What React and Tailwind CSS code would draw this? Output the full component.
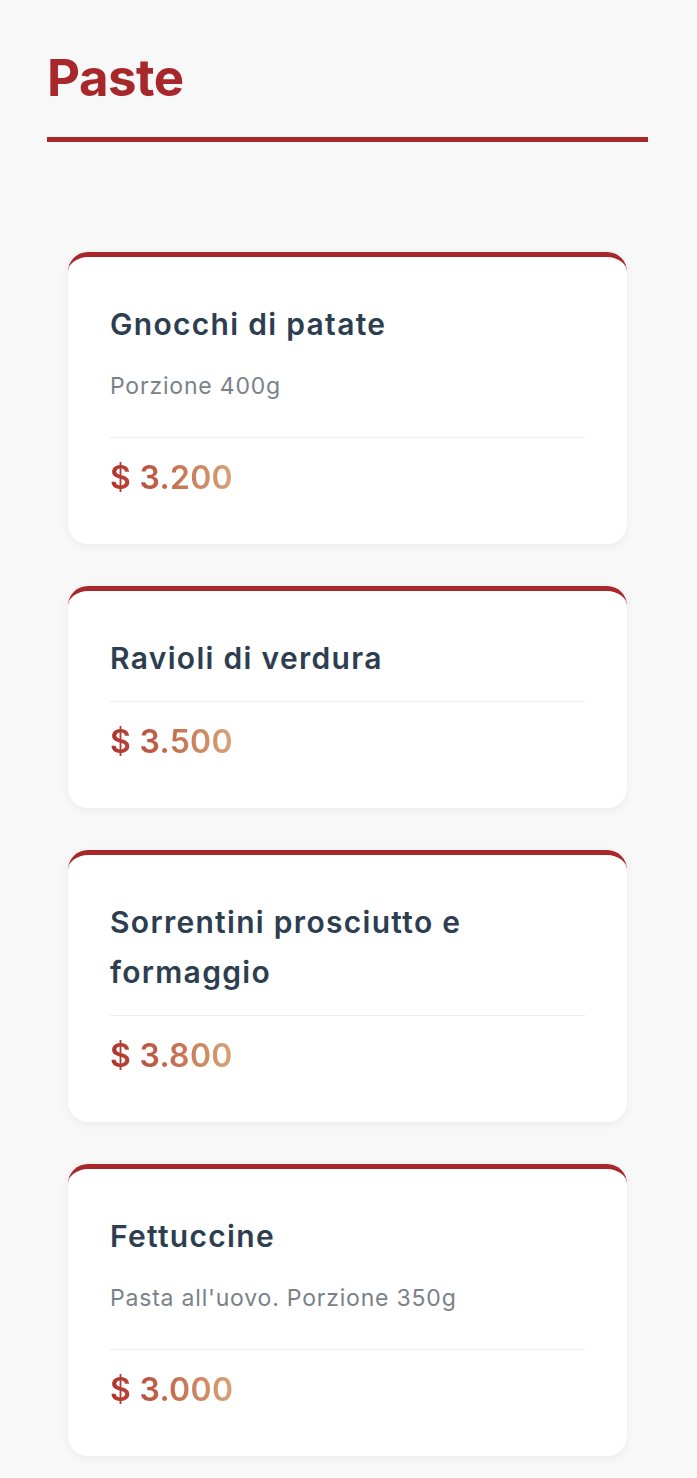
import React from "react";

const items = [
  { name: "Gnocchi di patate", desc: "Porzione 400g", price: "$ 3.200" },
  { name: "Ravioli di verdura", price: "$ 3.500" },
  { name: "Sorrentini prosciutto e formaggio", price: "$ 3.800" },
  { name: "Fettuccine", desc: "Pasta all'uovo. Porzione 350g", price: "$ 3.000" },
];

function Card({ item }) {
  return (
    <div className="flex flex-col bg-white rounded-[20px] border-t-[5px] border-[#a8272b] shadow-[0_2px_10px_rgba(0,0,0,0.06)] px-[42px] pt-[42px] pb-[42px]">
      <h3 className="text-[30px] leading-[50px] font-semibold text-[#2c3e50] tracking-[1.3px]">
        {item.name}
      </h3>
      {item.desc && (
        <p className="mt-[20px] mb-[16px] text-[23px] leading-[34px] text-[#7a8288] tracking-[0.8px]">
          {item.desc}
        </p>
      )}
      <div className="mt-[18px] border-t border-[#eeeeee] pt-[16px]">
        <span className="inline-block text-[32px] leading-[48px] font-semibold tracking-[0.3px] bg-gradient-to-r from-[#ae2f2b] to-[#d6a476] bg-clip-text text-transparent">
          {item.price}
        </span>
      </div>
    </div>
  );
}

export default function App() {
  return (
    <div
      className="min-h-[1478px] bg-[#f8f8f9] pl-[47px] pr-[49px] pt-[42px] pb-[26px]"
      style={{ fontFamily: "Inter, 'Noto Sans', sans-serif" }}
    >
      <h1 className="text-[51px] leading-[72px] font-bold text-[#a8272b] tracking-[-0.5px]">Paste</h1>
      <div className="mt-[23px] h-[5px] bg-[#a8272b]" />
      <div className="mt-[110px] px-[21px] flex flex-col gap-[42px]">
        {items.map((it) => (
          <Card key={it.name} item={it} />
        ))}
      </div>
    </div>
  );
}
